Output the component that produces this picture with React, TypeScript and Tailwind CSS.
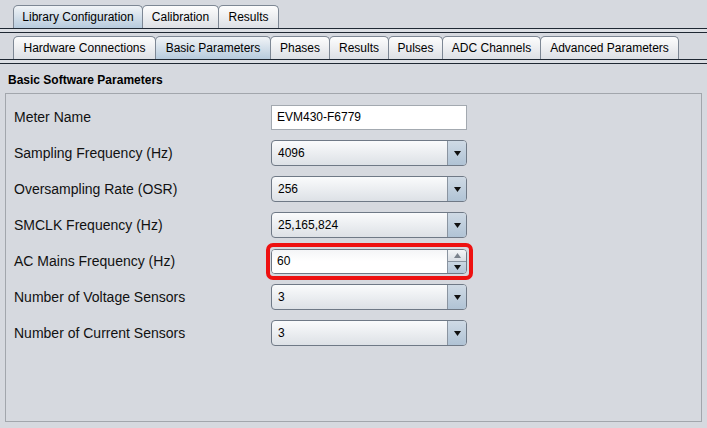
import React from "react";

const topTabs = [
  { label: "Library Configuration", w: "w-[130px]", active: true },
  { label: "Calibration", w: "w-[77px]", active: false },
  { label: "Results", w: "w-[61px]", active: false },
];

const subTabs = [
  { label: "Hardware Connections", w: "w-[143px]", active: false },
  { label: "Basic Parameters", w: "w-[116px]", active: true },
  { label: "Phases", w: "w-[60px]", active: false },
  { label: "Results", w: "w-[60px]", active: false },
  { label: "Pulses", w: "w-[55px]", active: false },
  { label: "ADC Channels", w: "w-[99px]", active: false },
  { label: "Advanced Parameters", w: "w-[139px]", active: false },
];

const rows = [
  { label: "Meter Name", value: "EVM430-F6779", kind: "text" },
  { label: "Sampling Frequency (Hz)", value: "4096", kind: "combo" },
  { label: "Oversampling Rate (OSR)", value: "256", kind: "combo" },
  { label: "SMCLK Frequency (Hz)", value: "25,165,824", kind: "combo" },
  { label: "AC Mains Frequency (Hz)", value: "60", kind: "spin" },
  { label: "Number of Voltage Sensors", value: "3", kind: "combo" },
  { label: "Number of Current Sensors", value: "3", kind: "combo" },
];

const Tab = ({ label, w, active }: { label: string; w: string; active: boolean }) => (
  <div
    className={`${w} h-[23px] -ml-px first:ml-0 flex items-center justify-center border border-b-0 border-[#7d8794] rounded-t-[5px] text-[12px] text-black ${
      active
        ? "bg-gradient-to-b from-[#f1f4f7] to-[#b7cbdd]"
        : "bg-gradient-to-b from-[#fdfdfd] to-[#dde0e5]"
    }`}
  >
    {label}
  </div>
);

// double rule under each tab row
const Separator = () => (
  <div className="h-[5px] border-y border-[#1f2833] bg-[#dcdfe4]" />
);

const Arrow = ({ up, dim }: { up?: boolean; dim?: boolean }) => (
  <svg width="7" height="5" viewBox="0 0 7 5">
    <path
      d={up ? "M0 5 L3.5 0 L7 5 Z" : "M0 0 L7 0 L3.5 5 Z"}
      fill={dim ? "#7a828c" : "#111"}
    />
  </svg>
);

const Field = ({ kind, value }: { kind: string; value: string }) => {
  if (kind === "text") {
    return (
      <div className="w-[196px] h-[25px] border border-[#a3a9b0] bg-white flex items-center pl-[5px] text-[12px] text-black">
        {value}
      </div>
    );
  }
  if (kind === "spin") {
    return (
      <div className="relative">
        {/* red highlight around the spinner */}
        <div className="absolute -left-[5px] -top-[6px] -right-[6px] -bottom-[6px] border-[4px] border-[#ee1111] rounded-[7px]" />
        <div className="w-[196px] h-[25px] flex border border-[#6f7986] rounded-[4px] bg-white overflow-hidden">
          <div className="flex-1 flex items-center pl-[5px] text-[12px] text-black bg-gradient-to-b from-[#f4f5f7] via-white to-white">
            {value}
          </div>
          <div className="w-[19px] flex flex-col border-l border-[#8a94a0]">
            <div className="flex-1 flex items-center justify-center bg-gradient-to-b from-[#f3f5f7] to-[#d9dee4] border-b border-[#8a94a0]">
              <Arrow up dim />
            </div>
            <div className="flex-1 flex items-center justify-center bg-gradient-to-b from-[#cbd7e2] to-[#b3c6d8]">
              <Arrow />
            </div>
          </div>
        </div>
      </div>
    );
  }
  return (
    <div className="w-[196px] h-[26px] flex border border-[#6f7986] rounded-[4px] overflow-hidden bg-gradient-to-b from-[#fafbfc] to-[#dde1e6]">
      <div className="flex-1 flex items-center pl-[6px] text-[12px] text-black">{value}</div>
      <div className="w-[19px] flex items-center justify-center border-l border-[#8a94a0] bg-gradient-to-b from-[#cfdae5] to-[#b0c3d5]">
        <Arrow />
      </div>
    </div>
  );
};

export default function App() {
  return (
    <div
      className="w-[707px] h-[428px] bg-[#d6d9df] flex flex-col overflow-hidden"
      style={{ fontFamily: '"Liberation Sans", Arial, sans-serif' }}
    >
      <div className="flex items-end pl-[13px] pt-[5px]">
        {topTabs.map((t) => (
          <Tab key={t.label} {...t} />
        ))}
      </div>
      <Separator />
      <div className="flex items-end pl-[13px] pt-[3px]">
        {subTabs.map((t) => (
          <Tab key={t.label} {...t} />
        ))}
      </div>
      <Separator />
      <div className="flex-1 flex flex-col px-[5px] pb-[6px]">
        <div className="h-[29px] flex items-end pb-[4px] pl-[3px] text-[12px] font-bold text-black">
          Basic Software Parameters
        </div>
        <div className="flex-1 border border-[#a2a6ac] pt-[5px] pl-[8px]">
          {rows.map((r) => (
            <div key={r.label} className="h-[36px] flex items-center">
              <div className="w-[257px] text-[14px] text-[#111]">{r.label}</div>
              <Field kind={r.kind} value={r.value} />
            </div>
          ))}
        </div>
      </div>
    </div>
  );
}
